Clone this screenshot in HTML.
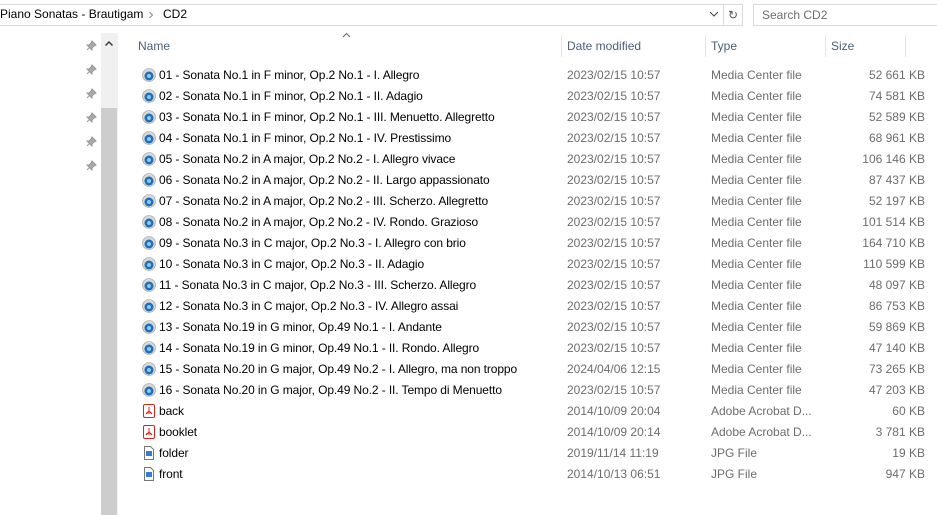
<!DOCTYPE html>
<html><head><style>
body{margin:0;width:937px;height:515px;background:#fff;font-family:"Liberation Sans",sans-serif;font-size:12px;position:relative;overflow:hidden}
.a{position:absolute}
.row{position:absolute;left:0;height:21px;line-height:21px;width:937px}
.row span{position:absolute;white-space:nowrap}
.n{left:159px;color:#000;letter-spacing:-0.1px}
.d{left:567px;color:#6d6d6d}
.t{left:711px;color:#6d6d6d}
.s{right:12px;color:#6d6d6d}
.ic{position:absolute;left:142px;top:3px;width:14px;height:14px}
.h{position:absolute;top:39px;color:#4c607a;font-size:12px}
.sep{position:absolute;top:35px;width:1px;height:22px;background:#e5e5e5}
.pin{position:absolute;left:86px;width:11px;height:11px}
</style></head><body>
<div class="a" style="left:0;top:4px;width:723px;height:20px;border:1px solid #d9d9d9;border-left:none"></div>
<div class="a" style="left:0;top:7px;color:#000;font-size:12px">Piano Sonatas - Brautigam</div>
<svg class="a" style="left:148px;top:11px" width="6" height="8" viewBox="0 0 6 8"><path d="M1.5 1l3 3-3 3" stroke="#888" fill="none"/></svg>
<div class="a" style="left:163px;top:7px;color:#000">CD2</div>
<svg class="a" style="left:709px;top:11px" width="10" height="6" viewBox="0 0 10 6"><path d="M1 1l4 4 4-4" stroke="#444" fill="none"/></svg>
<div class="a" style="left:723px;top:4px;width:18px;height:20px;border:1px solid #d9d9d9;color:#555;text-align:center;line-height:20px;font-size:12px">↻</div>
<div class="a" style="left:753px;top:4px;width:190px;height:20px;border:1px solid #d9d9d9"></div>
<div class="a" style="left:762px;top:8px;color:#6d6d6d">Search CD2</div>
<div class="a" style="left:101px;top:33px;width:16px;height:482px;background:#f0f0f0"></div>
<div class="a" style="left:101px;top:108px;width:16px;height:407px;background:#cdcdcd"></div>
<svg class="a" style="left:104px;top:40px" width="10" height="7" viewBox="0 0 10 7"><path d="M1.5 5.5l3.5-3.5 3.5 3.5" stroke="#333" stroke-width="1.4" fill="none"/></svg>
<div class="a" style="left:117px;top:33px;width:1px;height:482px;background:#f0f0f0"></div>
<svg class="pin" style="top:40px" viewBox="0 0 11 11"><path d="M6 1l4 4-2 1-2 2 0 2-5-5 2 0 2-2z M3.5 7.5L1 10" stroke="#999" fill="#aaa"/></svg>
<svg class="pin" style="top:64px" viewBox="0 0 11 11"><path d="M6 1l4 4-2 1-2 2 0 2-5-5 2 0 2-2z M3.5 7.5L1 10" stroke="#999" fill="#aaa"/></svg>
<svg class="pin" style="top:88px" viewBox="0 0 11 11"><path d="M6 1l4 4-2 1-2 2 0 2-5-5 2 0 2-2z M3.5 7.5L1 10" stroke="#999" fill="#aaa"/></svg>
<svg class="pin" style="top:112px" viewBox="0 0 11 11"><path d="M6 1l4 4-2 1-2 2 0 2-5-5 2 0 2-2z M3.5 7.5L1 10" stroke="#999" fill="#aaa"/></svg>
<svg class="pin" style="top:136px" viewBox="0 0 11 11"><path d="M6 1l4 4-2 1-2 2 0 2-5-5 2 0 2-2z M3.5 7.5L1 10" stroke="#999" fill="#aaa"/></svg>
<svg class="pin" style="top:160px" viewBox="0 0 11 11"><path d="M6 1l4 4-2 1-2 2 0 2-5-5 2 0 2-2z M3.5 7.5L1 10" stroke="#999" fill="#aaa"/></svg>
<svg class="a" style="left:342px;top:32px" width="9" height="6" viewBox="0 0 9 6"><path d="M1 5l3.5-3.5 3.5 3.5" stroke="#666" fill="none"/></svg>
<div class="h" style="left:138px">Name</div>
<div class="sep" style="left:561px"></div>
<div class="h" style="left:567px">Date modified</div>
<div class="sep" style="left:705px"></div>
<div class="h" style="left:711px">Type</div>
<div class="sep" style="left:825px"></div>
<div class="h" style="left:831px">Size</div>
<div class="sep" style="left:905px"></div>
<div id="rows"></div>
<script>
var m='<svg class="ic" viewBox="0 0 14 14"><circle cx="7" cy="7" r="6.5" fill="#d8d8d8" stroke="#999" stroke-width=".6"/><circle cx="7" cy="8" r="4.5" fill="#1e6fb8"/><circle cx="7" cy="8" r="2" fill="#8cc8f0"/></svg>';
var p='<svg class="ic" viewBox="0 0 14 14"><rect x="1.5" y=".5" width="11" height="13" rx="1.5" fill="#fff" stroke="#e0201b"/><path d="M7 3v4l-3 3M7 7l3 3M4 9h6" stroke="#e0201b" fill="none" stroke-width="1"/></svg>';
var j='<svg class="ic" viewBox="0 0 14 14"><path d="M2.5 .5h6l3 3v10h-9z" fill="#fff" stroke="#777"/><rect x="4" y="5" width="6" height="5" fill="#2f7fd6"/></svg>';
var R=[
["01 - Sonata No.1 in F minor, Op.2 No.1 - I. Allegro","2023/02/15 10:57","Media Center file","52 661 KB",m],
["02 - Sonata No.1 in F minor, Op.2 No.1 - II. Adagio","2023/02/15 10:57","Media Center file","74 581 KB",m],
["03 - Sonata No.1 in F minor, Op.2 No.1 - III. Menuetto. Allegretto","2023/02/15 10:57","Media Center file","52 589 KB",m],
["04 - Sonata No.1 in F minor, Op.2 No.1 - IV. Prestissimo","2023/02/15 10:57","Media Center file","68 961 KB",m],
["05 - Sonata No.2 in A major, Op.2 No.2 - I. Allegro vivace","2023/02/15 10:57","Media Center file","106 146 KB",m],
["06 - Sonata No.2 in A major, Op.2 No.2 - II. Largo appassionato","2023/02/15 10:57","Media Center file","87 437 KB",m],
["07 - Sonata No.2 in A major, Op.2 No.2 - III. Scherzo. Allegretto","2023/02/15 10:57","Media Center file","52 197 KB",m],
["08 - Sonata No.2 in A major, Op.2 No.2 - IV. Rondo. Grazioso","2023/02/15 10:57","Media Center file","101 514 KB",m],
["09 - Sonata No.3 in C major, Op.2 No.3 - I. Allegro con brio","2023/02/15 10:57","Media Center file","164 710 KB",m],
["10 - Sonata No.3 in C major, Op.2 No.3 - II. Adagio","2023/02/15 10:57","Media Center file","110 599 KB",m],
["11 - Sonata No.3 in C major, Op.2 No.3 - III. Scherzo. Allegro","2023/02/15 10:57","Media Center file","48 097 KB",m],
["12 - Sonata No.3 in C major, Op.2 No.3 - IV. Allegro assai","2023/02/15 10:57","Media Center file","86 753 KB",m],
["13 - Sonata No.19 in G minor, Op.49 No.1 - I. Andante","2023/02/15 10:57","Media Center file","59 869 KB",m],
["14 - Sonata No.19 in G minor, Op.49 No.1 - II. Rondo. Allegro","2023/02/15 10:57","Media Center file","47 140 KB",m],
["15 - Sonata No.20 in G major, Op.49 No.2 - I. Allegro, ma non troppo","2024/04/06 12:15","Media Center file","73 265 KB",m],
["16 - Sonata No.20 in G major, Op.49 No.2 - II. Tempo di Menuetto","2023/02/15 10:57","Media Center file","47 203 KB",m],
["back","2014/10/09 20:04","Adobe Acrobat D...","60 KB",p],
["booklet","2014/10/09 20:14","Adobe Acrobat D...","3 781 KB",p],
["folder","2019/11/14 11:19","JPG File","19 KB",j],
["front","2014/10/13 06:51","JPG File","947 KB",j]];
var h='';R.forEach(function(r,i){h+='<div class="row" style="top:'+(65+21*i)+'px">'+r[4]+'<span class="n">'+r[0]+'</span><span class="d">'+r[1]+'</span><span class="t">'+r[2]+'</span><span class="s">'+r[3]+'</span></div>'});
document.getElementById('rows').innerHTML=h;
</script>
</body></html>
